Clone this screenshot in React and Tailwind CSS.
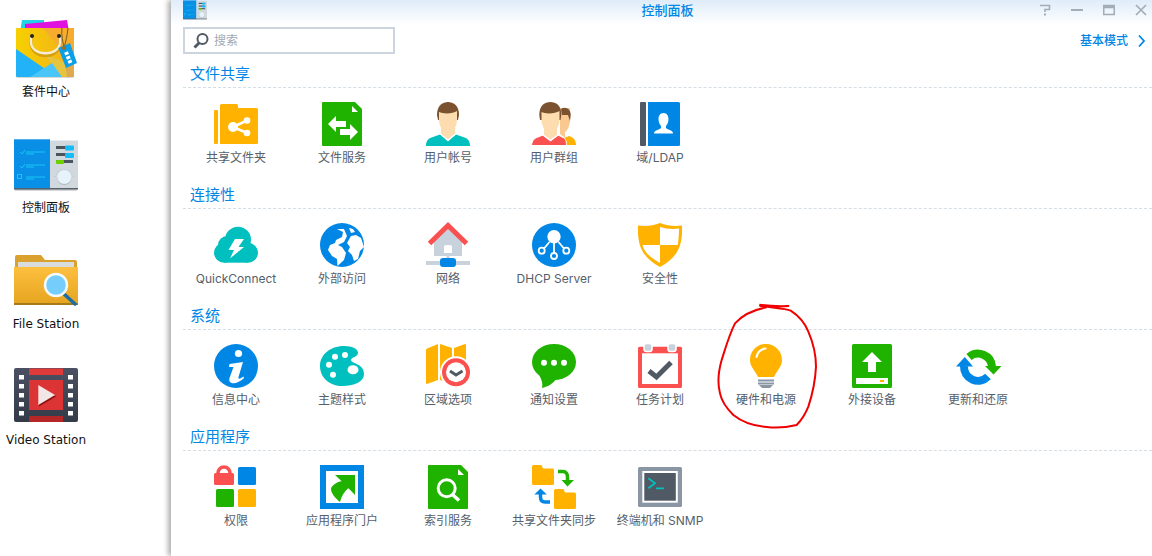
const BLUE = "#0086e5";
const RED = "#fb5050";
const ORANGE = "#ffb300";
const GREEN = "#1fb300";
const TEAL = "#00bfbf";
const SLATE = "#505a64";
const GRAY = "#c8d2dc";
const SKIN = "#fddcb0";
const HAIR = "#7a5230";

function S({ children }) {
  return (
    <svg width="44" height="44" viewBox="0 0 44 44" className="block overflow-visible">
      {children}
    </svg>
  );
}

const Doc = ({ children }) => (
  <S>
    <path fill={GREEN} d="M3 0H35L42 7V43a1 1 0 0 1-1 1H3a1 1 0 0 1-1-1V1a1 1 0 0 1 1-1Z" />
    <path fill="#fff" d="M32 4L38 10H32Z" />
    {children}
  </S>
);

const Shared = () => (
  <S>
    <rect x="0" y="8" width="4" height="34" rx="1" fill={ORANGE} />
    <path fill={ORANGE} d="M6 3.5A1.5 1.5 0 0 1 7.500 2H22.500A1.500 1.500 0 0 1 24 3.500V6H42.500A1.500 1.500 0 0 1 44 7.500V40.500A1.500 1.500 0 0 1 42.500 42H6Z" />
    <path stroke="#fff" strokeWidth="2.500" d="M19 25L33 18.500M19 25L33 31" />
    <circle cx="19" cy="25" r="5" fill="#fff" />
    <circle cx="33" cy="18.500" r="3.300" fill="#fff" />
    <circle cx="33" cy="31" r="3.300" fill="#fff" />
  </S>
);

const FileSvc = () => (
  <Doc>
    <path fill="#fff" d="M8 22L16 14V19H26V25H16V30ZM38 30L30 22V27H20V33H30V38Z" />
  </Doc>
);

const User = () => (
  <S>
    <path fill={TEAL} d="M0 44C0 38 3 36 7 35L14 32.500L22 38L30 32.500L37 35C41 36 44 38 44 44Z" />
    <path fill={SKIN} d="M15 24V32L22 37.500L29 32V24Z" />
    <path fill="none" stroke="#fff" strokeWidth="1.500" d="M14.500 32L22 38.500L29.500 32" />
    <path fill={HAIR} d="M11 13C11 3 17 0 22 0C27 0 33 3 33 13L32 18H12Z" />
    <path fill={SKIN} d="M13 10C17 12 27 12 31 9V18C31 25 26 31 22 31C18 31 13 25 13 18Z" />
  </S>
);

const Group = () => (
  <S>
    <path fill={ORANGE} d="M32 36L37 34C41 35 44 38 44 43H34Z" />
    <path fill="#fac98f" d="M28 6H38V18C38 24 35 29 33 30V36L28 32Z" />
    <path fill={HAIR} d="M29 7C33 4 39 7 38.700 13L38 19L36 13H30Z" />
    <path fill={RED} stroke="#fff" strokeWidth="1" d="M-0.500 43.500C0 38 3 36 6 35L11 33L18.500 38L26 33L30 35C33 36 34.500 38 34.500 43.500Z" />
    <path fill={SKIN} d="M12 24V33L18.500 37.500L25 33V24Z" />
    <path fill="none" stroke="#fff" strokeWidth="1.500" d="M11 33L18.500 38.500L26 33" />
    <path fill={HAIR} d="M7.300 13C7.300 3 13 0 18.300 0C24 0 29.300 3 29.300 13L28.500 18H8Z" />
    <path fill={SKIN} d="M9.500 10C13 12 23 12 27.500 9V18C27.500 25 22.500 31 18.500 31C14.500 31 9.500 25 9.500 18Z" />
  </S>
);

const Domain = () => (
  <S>
    <rect x="2" y="0" width="6" height="44" rx="1" fill={SLATE} />
    <path fill={BLUE} d="M10 0H40.500A1.500 1.500 0 0 1 42 1.500V42.500A1.500 1.500 0 0 1 40.500 44H10Z" />
    <path fill="#fff" d="M25.500 11C29 11 30.500 14 30.500 17C30.500 20 29.500 22 28 24V26C30 28 35 28 35 31.500H16C16 28 21 28 23 26V24C21.500 22 20.500 20 20.500 17C20.500 14 22 11 25.500 11Z" />
  </S>
);

const Quick = () => (
  <S>
    <g fill={TEAL}>
      <circle cx="10" cy="29.700" r="10" />
      <circle cx="34" cy="29.700" r="10" />
      <circle cx="24" cy="16.700" r="13" />
      <circle cx="13" cy="22" r="9" />
      <rect x="10" y="20" width="24" height="19.700" />
    </g>
    <path fill="#fff" d="M21 16H30L24.500 24H30L16 35.500L20 27H14.500Z" />
  </S>
);

const Globe = () => (
  <S>
    <circle cx="22" cy="22" r="22" fill={BLUE} />
    <path fill="#fff" d="M17 6L23 9L22 14L16 17L15 20L10 22L8 27L12 33L17 36L17.500 43L24 37L26 30L22 24L18 22L24 19L27 13L24 6Z" />
    <path fill="#fff" d="M31 13L36 12L41 15L44 24L40 28L38 36L34 38L32 32L28 28L30 24L27 20Z" />
    <path fill="#fff" d="M29 5L33 6L35 9L31 10Z" />
  </S>
);

const Network = () => (
  <S>
    <path fill={GRAY} d="M22 5L36 19V33H8V19Z" />
    <path fill="#fff" d="M18 24Q18 22 20 22H24Q26 22 26 24V30H18Z" />
    <path fill="none" stroke={RED} strokeWidth="5" d="M3.500 20.500L22 2.500L40.500 20.500" />
    <rect x="20.500" y="33" width="3" height="5" fill={GRAY} />
    <rect x="0" y="38" width="44" height="4" fill={GRAY} />
    <rect x="14" y="35" width="16" height="9" rx="3" fill={BLUE} />
  </S>
);

const Dhcp = () => (
  <S>
    <circle cx="22" cy="22" r="22" fill={BLUE} />
    <circle cx="22" cy="13.700" r="6.700" fill="#fff" />
    <g stroke="#fff" strokeWidth="1.800" fill="none">
      <path d="M22 20V30M17.500 19L12 25.500M26.500 19L32 25.500" />
      <circle cx="9.700" cy="27.700" r="3" />
      <circle cx="22" cy="33" r="3" />
      <circle cx="34.300" cy="27.700" r="3" />
    </g>
  </S>
);

const Shield = () => (
  <S>
    <path fill={ORANGE} d="M22 0C29 3 37 3.500 44 2.500C44.500 20 42 33 22 44C2 33-0.500 20 0 2.500C7 3.500 15 3 22 0Z" />
    <path fill="#fff" d="M22 4C28 6 35 6.500 41 5.500C41 12 40.500 17 39.800 22H22Z" />
    <path fill="#fff" d="M4.500 22H22V40C12 34.500 6 29 4.500 22Z" />
  </S>
);

const Info = () => (
  <S>
    <circle cx="22" cy="22" r="22" fill={BLUE} />
    <circle cx="24.500" cy="9.500" r="3.600" fill="#fff" />
    <path fill="#fff" d="M15.500 20L29 18L24.500 33C24 35 25 35.500 29.500 32.500L30 34C26 38 21 40 17.500 39C15 38 15 36 15.500 34L19.500 23L15 23Z" />
  </S>
);

const Palette = () => (
  <S>
    <path fill={TEAL} d="M24 2C33 2 38 5 38 9C38 13 31 13 31 16C31 20 44 19 44 30C44 38 34 42 22 42C10 42 0 34 0 22C0 11 10 2 24 2Z" />
    <g fill="#fff">
      <circle cx="15" cy="12.700" r="3" />
      <circle cx="25" cy="11" r="3" />
      <circle cx="9" cy="20.700" r="3" />
      <circle cx="13" cy="30.700" r="3" />
      <ellipse cx="33" cy="25.700" rx="5.500" ry="4.500" />
    </g>
  </S>
);

const MapIcon = () => (
  <S>
    <g fill={ORANGE}>
      <path d="M0 6Q0 5 1 4.500L12 0V36L1 40Q0 40 0 39Z" />
      <path d="M14 0L26 4V40L14 36Z" />
      <path d="M28 4L39 0Q40 0 40 1V30H28Z" />
    </g>
    <circle cx="30" cy="28.300" r="16" fill="#fff" />
    <circle cx="30" cy="28.300" r="14" fill={RED} />
    <circle cx="30" cy="28.300" r="10" fill="#fff" />
    <path fill="none" stroke={SLATE} strokeWidth="3" d="M24 27L30 31L36.500 27" />
  </S>
);

const Chat = () => (
  <S>
    <ellipse cx="22" cy="18" rx="22" ry="18" fill={GREEN} />
    <path fill={GREEN} d="M7 31C10 36 11 40 10 44C15 43 21 40 25 34Z" />
    <g fill="#fff">
      <circle cx="12" cy="18.700" r="3" />
      <circle cx="22" cy="18.700" r="3" />
      <circle cx="32" cy="18.700" r="3" />
    </g>
  </S>
);

const Calendar = () => (
  <S>
    <rect x="0" y="2.700" width="44" height="41.300" rx="1.500" fill={RED} />
    <rect x="4" y="9.300" width="36" height="30.700" fill="#fff" />
    <rect x="6" y="-0.500" width="8" height="8" rx="2.500" fill={GRAY} stroke="#fff" strokeWidth="1.500" />
    <rect x="30" y="-0.500" width="8" height="8" rx="2.500" fill={GRAY} stroke="#fff" strokeWidth="1.500" />
    <path fill="none" stroke={SLATE} strokeWidth="5" d="M11 27L18.500 33L33 18.500" />
  </S>
);

const Bulb = () => (
  <S>
    <path fill={ORANGE} d="M22 0C31 0 38 7 38 16C38 23 33 26 30 33H14C11 26 6 23 6 16C6 7 13 0 22 0Z" />
    <path fill="none" stroke="#fff" strokeWidth="2.200" strokeLinecap="round" d="M12.500 13C13 8.500 17 5 21.500 4.500" />
    <rect x="14" y="35.500" width="16" height="2" fill="#8a96a3" />
    <rect x="14" y="38.500" width="16" height="2" fill="#8a96a3" />
    <path fill="#8a96a3" d="M15 41H29L26 44H18Z" />
  </S>
);

const Upload = () => (
  <S>
    <rect x="2" y="0" width="40" height="44" rx="1.500" fill={GREEN} />
    <path fill="#fff" d="M22 8L32 18H26V28H18V18H12Z" />
    <rect x="6" y="34" width="32" height="6" fill="#fff" />
    <rect x="30" y="36" width="4" height="2" fill={ORANGE} />
  </S>
);

const Refresh = () => (
  <S>
    <path fill="none" stroke={GREEN} strokeWidth="8" d="M13 13A14 14 0 0 1 36 22.500" />
    <path fill={GREEN} d="M29 22H45.500L37.500 30.500Z" />
    <path fill="none" stroke={BLUE} strokeWidth="8" d="M8 22A14 14 0 0 0 32 32.500" />
    <path fill={BLUE} d="M0 22.500H17L8.800 13Z" />
  </S>
);

const Lock = () => (
  <S>
    <path fill="none" stroke={RED} strokeWidth="3.500" d="M4 10V8A6 6 0 0 1 16 8V10" />
    <rect x="0" y="8" width="20" height="12" rx="1.500" fill={RED} />
    <rect x="24" y="2" width="18" height="18" rx="1.500" fill={BLUE} />
    <rect x="2" y="24" width="18" height="18" rx="1.500" fill={GREEN} />
    <rect x="24" y="24" width="18" height="18" rx="1.500" fill={ORANGE} />
  </S>
);

const Portal = () => (
  <S>
    <rect x="3" y="3" width="38" height="38" fill="#fff" stroke={BLUE} strokeWidth="6" />
    <path fill={GREEN} d="M15 10H35V30L28.500 23.300C25 26 22 30 20 37C15 33 11 28 11 24C11 21 18 16 21.700 16.300Z" />
  </S>
);

const SearchDoc = () => (
  <Doc>
    <circle cx="20.700" cy="23.300" r="8.500" fill="none" stroke="#fff" strokeWidth="3" />
    <path stroke="#fff" strokeWidth="3.500" d="M27 30L33 35.500" />
  </Doc>
);

const Sync = () => (
  <S>
    <path fill={ORANGE} d="M0 1.500A1.500 1.500 0 0 1 1.500 0H9.500L11 3.500H20.500A1.500 1.500 0 0 1 22 5V18.500A1.500 1.500 0 0 1 20.500 20H1.500A1.500 1.500 0 0 1 0 18.500Z" />
    <path fill={ORANGE} d="M22 25.500A1.500 1.500 0 0 1 23.500 24H31.500L33 27.500H42.500A1.500 1.500 0 0 1 44 29V42.500A1.500 1.500 0 0 1 42.500 44H23.500A1.500 1.500 0 0 1 22 42.500Z" />
    <path fill="none" stroke={GREEN} strokeWidth="3.500" d="M26 6.500H31C34 6.500 35.500 9 35.500 12V16" />
    <path fill={GREEN} d="M29.500 15H42L35.500 21.500Z" />
    <path fill="none" stroke={BLUE} strokeWidth="3.500" d="M8.500 28V32C8.500 35 10 37 13 37H18" />
    <path fill={BLUE} d="M2.300 29.500H14.800L8.500 23.500Z" />
  </S>
);

const Terminal = () => (
  <S>
    <rect x="0" y="2" width="44" height="40" rx="1.500" fill="#8a96a3" />
    <rect x="4.300" y="6" width="35.500" height="31.700" fill="#fff" />
    <rect x="6.300" y="8" width="31.500" height="27.700" fill={SLATE} />
    <path fill="none" stroke={TEAL} strokeWidth="1.800" d="M10.300 13.300L17 18.300L10.300 23.300M18 23.300H26" />
  </S>
);

const BagIcon = () => (
  <svg width="64" height="64" viewBox="0 0 64 64" className="block">
    <defs>
      <linearGradient id="bagYellow" x1="0" y1="0" x2="1" y2="0">
        <stop offset="0" stopColor="#f7d000" />
        <stop offset="1" stopColor="#f2b01e" />
      </linearGradient>
    </defs>
    <path fill="#22d3e6" d="M8 4H30V16H6Z" />
    <path fill="#e012e0" d="M11 8L53 4L55 16H11Z" />
    <rect x="2" y="12" width="58" height="50" rx="2" fill="#8d8d8d" opacity="0.35" />
    <rect x="2" y="12" width="58" height="49" rx="1" fill="url(#bagYellow)" />
    <path fill="#f6ad2e" d="M29 12H60V50Z" />
    <path fill="#e5c440" d="M30 38L60 50V61H48Z" />
    <path fill="#21b2f7" d="M2 33L43 61H3A1 1 0 0 1 2 60Z" />
    <path fill="#49c5f7" d="M16 61L38 47L48 61Z" />
    <path fill="#dfa94f" d="M50 40L60 42V61H53Z" />
    <path fill="none" stroke="#c9940b" strokeWidth="3" d="M17 22V27C17 44 46 44 46 27V22" opacity="0.7" />
    <path fill="none" stroke="#f6ecd6" strokeWidth="2.300" d="M17 21V26C17 41 46 41 46 26V21" />
    <circle cx="18" cy="20" r="2" fill="#222" />
    <circle cx="45" cy="20" r="2" fill="#222" />
    <path fill="none" stroke="#7a5a1a" strokeWidth="1" d="M48 12C47 20 49 26 50 31M54 12C53 20 52 26 50 31" />
    <path fill="#0d9ee8" d="M44.300 32L56 27L63 47L52 52Z" />
    <circle cx="50" cy="32" r="2" fill="#9a6f1a" />
    <path stroke="#fff" strokeWidth="4" strokeDasharray="3 1.500" d="M52 36L56.500 47" />
  </svg>
);

const PanelIcon = ({ w = 64, h = 64, box = "0 0 64 64" }) => (
  <svg width={w} height={h} viewBox={box} className="block">
    <rect x="1" y="57" width="62" height="2" fill="#999" opacity="0.4" />
    <rect x="0" y="7.300" width="36" height="50" fill="#0a8fe6" />
    <rect x="36" y="8.500" width="28" height="48.800" fill="#d1d9de" />
    <rect x="0" y="56" width="64" height="1.500" fill="#55606a" />
    <g stroke="#16c5f5" strokeWidth="1" fill="none">
      <path d="M6 20L8 22L11 18M12 20H31M12 22H20M6 34L8 36L11 32M12 33H31M12 35H20M12 45H31M12 47H20" />
      <rect x="3.500" y="42.500" width="4" height="4" />
    </g>
    <g>
      <rect x="42" y="14" width="17" height="3" fill="#4b555f" />
      <rect x="51" y="13.500" width="9" height="5" rx="1" fill="#14bdf5" />
      <rect x="42" y="21" width="17" height="3" fill="#4b555f" />
      <rect x="51" y="21" width="9" height="5" rx="1" fill="#14bdf5" />
      <rect x="42" y="28" width="17" height="3" fill="#4b555f" />
      <rect x="42" y="28" width="8" height="4" rx="1" fill="#6fd000" />
    </g>
    <path stroke="#aab4bc" strokeWidth="0.800" strokeDasharray="1 2" fill="none" d="M41 45A9.500 9.500 0 0 1 59.500 45" />
    <circle cx="50.300" cy="46" r="7" fill="#8b98a2" opacity="0.5" />
    <circle cx="50.300" cy="45" r="7" fill="#e6f3fb" />
  </svg>
);

const FolderIcon = () => (
  <svg width="64" height="64" viewBox="0 0 64 64" className="block">
    <defs>
      <linearGradient id="folderFill" x1="0" y1="0" x2="0" y2="1">
        <stop offset="0" stopColor="#fdbf3f" />
        <stop offset="1" stopColor="#e6a521" />
      </linearGradient>
    </defs>
    <path fill="#dba12e" d="M1 9A2 2 0 0 1 3 7H27L31 12H61A2 2 0 0 1 63 14V25H1Z" />
    <rect x="4" y="14" width="56" height="8" fill="#d9dcdc" />
    <rect x="0" y="19" width="64" height="37" fill="url(#folderFill)" />
    <rect x="0" y="55" width="64" height="2" fill="#a77a1a" />
    <path stroke="#1a6ea5" strokeWidth="3.500" strokeLinecap="round" d="M50 46L61 56" />
    <circle cx="42" cy="37" r="11" fill="#74cdfb" stroke="#f3f8fb" strokeWidth="2.500" />
  </svg>
);

const VideoIcon = () => {
  const ys = [11, 20, 29, 38, 47];
  return (
    <svg width="64" height="64" viewBox="0 0 64 64" className="block">
      <defs>
        <linearGradient id="filmFill" x1="0" y1="0" x2="0" y2="1">
          <stop offset="0" stopColor="#4b5163" />
          <stop offset="1" stopColor="#333a48" />
        </linearGradient>
      </defs>
      <rect x="0" y="4" width="64" height="54" rx="2" fill="url(#filmFill)" />
      <rect x="15" y="4.500" width="34" height="6.500" fill="#de3a3a" />
      <rect x="15" y="16" width="34" height="30" fill="#dc3434" />
      <rect x="15" y="52" width="34" height="6" fill="#b52626" />
      {ys.map((y) => (
        <g key={y} fill="#fff">
          <rect x="5" y={y} width="5" height="4.500" />
          <rect x="54" y={y} width="5" height="4.500" />
        </g>
      ))}
      <path fill="#8f1010" d="M25 22.500V42.500L42 32.500Z" />
      <path fill="#f2e6e6" d="M24.300 21V41L41 31Z" />
    </svg>
  );
};

const sections = [
  {
    title: "文件共享",
    items: [
      ["共享文件夹", Shared],
      ["文件服务", FileSvc],
      ["用户帐号", User],
      ["用户群组", Group],
      ["域/LDAP", Domain],
    ],
  },
  {
    title: "连接性",
    items: [
      ["QuickConnect", Quick],
      ["外部访问", Globe],
      ["网络", Network],
      ["DHCP Server", Dhcp],
      ["安全性", Shield],
    ],
  },
  {
    title: "系统",
    items: [
      ["信息中心", Info],
      ["主题样式", Palette],
      ["区域选项", MapIcon],
      ["通知设置", Chat],
      ["任务计划", Calendar],
      ["硬件和电源", Bulb],
      ["外接设备", Upload],
      ["更新和还原", Refresh],
    ],
  },
  {
    title: "应用程序",
    items: [
      ["权限", Lock],
      ["应用程序门户", Portal],
      ["索引服务", SearchDoc],
      ["共享文件夹同步", Sync],
      ["终端机和 SNMP", Terminal],
    ],
  },
];

const desktop = [
  ["套件中心", BagIcon],
  ["控制面板", PanelIcon],
  ["File Station", FolderIcon],
  ["Video Station", VideoIcon],
];

const SANS = "font-['Inter','Noto_Sans_CJK_SC',sans-serif]";

export default function App() {
  return (
    <div className={`relative flex h-[556px] w-[1152px] overflow-hidden bg-white ${SANS}`}>
      <aside className="flex w-[171px] shrink-0 flex-col pt-4">
        {desktop.map(([label, Icon]) => (
          <div key={label} className="flex h-[116px] w-[92px] flex-col items-center">
            <Icon />
            <span className="mt-[4px] whitespace-nowrap font-['DejaVu_Sans','Noto_Sans_CJK_SC',sans-serif] text-[12px] leading-4 text-[#111]">
              {label}
            </span>
          </div>
        ))}
      </aside>

      <main className="min-w-0 flex-1 bg-white shadow-[-3px_0_5px_rgba(0,0,0,0.32)]">
        <header className="grid h-[25px] grid-cols-[1fr_auto_1fr] items-start bg-gradient-to-b from-[#dfecf9] to-white pl-3">
          <PanelIcon w={24} h={20} box="0 7 64 52" />
          <h1 className="text-[13px] font-medium leading-5 text-[#0086e5]">控制面板</h1>
          <div className="flex justify-end gap-5 pr-[5px] pt-1">
            <svg width="12" height="12" viewBox="0 0 12 12" fill="none" stroke="#a3adb8" strokeWidth="1.600">
              <path d="M1 1.500H10.500V5.500H6V8" />
              <rect x="5" y="9.500" width="2" height="2" fill="#a3adb8" stroke="none" />
            </svg>
            <svg width="12" height="12" viewBox="0 0 12 12" fill="none" stroke="#a3adb8" strokeWidth="2">
              <path d="M0 6H12" />
            </svg>
            <svg width="12" height="12" viewBox="0 0 12 12" fill="none" stroke="#a3adb8">
              <rect x="0.750" y="1.500" width="10.500" height="9" strokeWidth="1.500" />
              <path d="M0.750 3H11.250" strokeWidth="2.500" />
            </svg>
            <svg width="12" height="12" viewBox="0 0 12 12" fill="none" stroke="#a3adb8" strokeWidth="1.700">
              <path d="M1 1L11 11M11 1L1 11" />
            </svg>
          </div>
        </header>

        <div className="mb-2 mt-[2px] flex h-[27px] items-center justify-between pl-3 pr-[7px]">
          <div className="flex h-[27px] w-[212px] items-center gap-[5px] border-2 border-[#ccd5df] pl-2">
            <svg width="16" height="16" viewBox="0 0 16 16" fill="none" stroke="#505a64">
              <circle cx="9.500" cy="6" r="5" strokeWidth="2" />
              <path d="M6 10L1.500 14.500" strokeWidth="3" />
            </svg>
            <span className="text-[12px] leading-none text-[#a0aab4]">搜索</span>
          </div>
          <div className="flex items-center gap-[10px]">
            <span className="text-[12px] font-medium leading-4 text-[#0086e5]">基本模式</span>
            <svg width="7" height="12" viewBox="0 0 7 12" fill="none" stroke="#0086e5" strokeWidth="1.700">
              <path d="M1 0.500L6 6L1 11.500" />
            </svg>
          </div>
        </div>

        {sections.map((section) => (
          <section key={section.title} className="h-[121px]">
            <div className="ml-3 h-[26px] border-b border-dashed border-[#d5dde5] pl-[7px]">
              <h2 className="text-[15px] leading-6 text-[#0086e5]">{section.title}</h2>
            </div>
            <div className="flex pl-3 pt-[14px]">
              {section.items.map(([label, Icon]) => (
                <div key={label} className="flex w-[106px] flex-col items-center">
                  <Icon />
                  <span className="mt-[4px] whitespace-nowrap text-[12px] leading-4 text-[#56606a]">{label}</span>
                </div>
              ))}
            </div>
          </section>
        ))}
      </main>

      <svg
        width="330"
        height="135"
        viewBox="0 0 990 405"
        fill="none"
        stroke="#f00000"
        strokeWidth="6"
        strokeLinejoin="round"
        className="absolute left-[500px] top-[300px]"
      >
        <path d="M778 14C805 18 840 19 865 18C835 20 805 18 780 17C810 24 850 24 872 32C900 50 915 70 925 95C940 130 948 165 948 200C946 240 940 275 925 320C915 345 905 360 890 375C860 382 830 385 800 381C760 378 725 365 700 345C680 325 665 305 660 280C652 250 655 215 665 180C675 150 685 110 705 70C725 48 755 30 800 22" />
      </svg>
    </div>
  );
}
